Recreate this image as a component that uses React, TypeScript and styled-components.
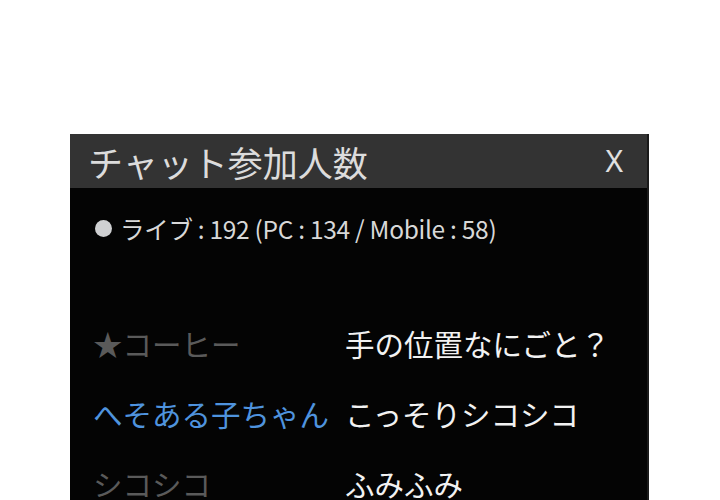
import React from 'react';
import styled, {createGlobalStyle} from 'styled-components';

type ChatRow = {
    name: string;
    message: string;
    kind: 'muted' | 'blue';
}

const rows: ChatRow[] = [
    {name: '★コーヒー', message: '手の位置なにごと？', kind: 'muted'},
    {name: 'へそある子ちゃん', message: 'こっそりシコシコ', kind: 'blue'},
    {name: 'シコシコ', message: 'ふみふみ', kind: 'muted'},
];

const GlobalStyle = createGlobalStyle`
    html, body {
        margin: 0;
        padding: 0;
        background: #ffffff;
        overflow: hidden;
    }
    body {
        font-family: "Noto Sans CJK JP", "Noto Sans", sans-serif;
    }
`

export default function App() {
    return (
        <>
            <GlobalStyle/>
            <Page>
                <Panel>
                    <Header>
                        <Title>チャット参加人数</Title>
                        <CloseButton>X</CloseButton>
                    </Header>
                    <Body>
                        <Status>
                            <Dot/>
                            <span>ライブ : 192 (PC : 134 / Mobile : 58)</span>
                        </Status>
                        <List>
                            {rows.map(row =>
                                <Row key={row.name}>
                                    <Name kind={row.kind}>{row.name}</Name>
                                    <Message>{row.message}</Message>
                                </Row>
                            )}
                        </List>
                    </Body>
                </Panel>
            </Page>
        </>
    );
}

const Page = styled.div`
    width: 720px;
    height: 500px;
    padding: 134px 0 0 70px;
    box-sizing: border-box;
    overflow: hidden;
`

const Panel = styled.div`
    width: 579px;
    height: 420px;
    background: #040404;
    border-right: 2px solid #1a1a1a;
    box-sizing: border-box;
    display: flex;
    flex-direction: column;
`

const Header = styled.div`
    height: 54px;
    background: #333333;
    display: flex;
    align-items: center;
    justify-content: space-between;
    padding: 0 24px 0 18px;
    flex-shrink: 0;
`

const Title = styled.div`
    color: #dcdcdc;
    font-size: 35px;
    line-height: 1;
`

const CloseButton = styled.div`
    color: #e0e0e0;
    font-size: 30px;
    line-height: 1;
    font-family: "Noto Sans", sans-serif;
`

const Body = styled.div`
    display: flex;
    flex-direction: column;
    padding-top: 20px;
`

const Status = styled.div`
    height: 40px;
    display: flex;
    align-items: center;
    gap: 8px;
    padding-left: 25px;
    color: #d8d8d8;
    font-size: 24.5px;
    letter-spacing: -0.3px;
`

const Dot = styled.span`
    width: 17px;
    height: 17px;
    border-radius: 50%;
    background: #cfd0d2;
    flex-shrink: 0;
`

const List = styled.div`
    display: flex;
    flex-direction: column;
    margin-top: 60px;
`

const Row = styled.div`
    height: 70px;
    display: grid;
    grid-template-columns: 252px 1fr;
    align-items: center;
    padding-left: 23px;
    font-size: 29.5px;
`

const Name = styled.div<{ kind: 'muted' | 'blue' }>`
    white-space: nowrap;
    color: ${({kind}) => kind === 'blue' ? '#4f93de' : '#5a5a5a'};
`

const Message = styled.div`
    white-space: nowrap;
    color: #f2f2f2;
`
